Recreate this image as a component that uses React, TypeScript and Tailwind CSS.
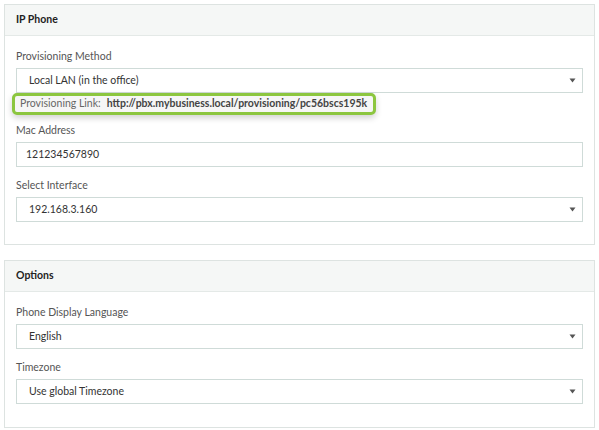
function Caret() {
  return (
    <svg width="7" height="5" viewBox="0 0 7 5" className="shrink-0">
      <path d="M0.5 0.5 L6.5 0.5 L3.5 4.5 Z" fill="#555" />
    </svg>
  );
}

function Field({ label, value, select = true }: { label: string; value: string; select?: boolean }) {
  return (
    <div className="flex flex-col">
      <div className="text-[10.5px] text-[#555] leading-[14px] mb-[5px]">{label}</div>
      <div
        className={`flex items-center justify-between h-[25px] border border-[#cfdbd8] bg-white pr-[6px] ${
          select ? "pl-[12px]" : "pl-[9px]"
        }`}
      >
        <span className="text-[10.5px] text-[#333]">{value}</span>
        {select && <Caret />}
      </div>
    </div>
  );
}

function Panel({ title, children, pb }: { title: string; children: React.ReactNode; pb: string }) {
  return (
    <div className="border border-[#dde3e1] bg-white">
      <div className="h-[31px] flex items-center px-[11px] bg-[#f5f7f6] border-b border-[#e4e9e7]">
        <span className="text-[10.5px] font-bold text-[#222]">{title}</span>
      </div>
      <div className={`px-[11px] pt-[13px] ${pb}`}>{children}</div>
    </div>
  );
}

export default function App() {
  return (
    <div
      className="w-[599px] h-[430px] bg-white px-[4px] pt-[4px] flex flex-col gap-[15px]"
      style={{ fontFamily: "Lato, 'Noto Sans', sans-serif" }}
    >
      <Panel title="IP Phone" pb="pb-[22px]">
        <div className="flex flex-col">
          <Field label="Provisioning Method" value="Local LAN (in the office)" />
          <div className="-ml-[4px] mb-[8px] self-start flex items-center gap-[6px] h-[22px] pl-[5px] pr-[6px] rounded-[5px] border-[3px] border-[#8cc63f] bg-[#f6f6f6] shadow-[0_3px_6px_rgba(0,0,0,0.18)]">
            <span className="text-[10.5px] text-[#666]">Provisioning Link:</span>
            <span className="text-[10.5px] font-bold text-[#444]">
              http://pbx.mybusiness.local/provisioning/pc56bscs195k
            </span>
          </div>
          <div className="flex flex-col gap-[11px]">
            <Field label="Mac Address" value="121234567890" select={false} />
            <Field label="Select Interface" value="192.168.3.160" />
          </div>
        </div>
      </Panel>
      <Panel title="Options" pb="pb-[23px]">
        <div className="flex flex-col gap-[11px]">
          <Field label="Phone Display Language" value="English" />
          <Field label="Timezone" value="Use global Timezone" />
        </div>
      </Panel>
    </div>
  );
}
